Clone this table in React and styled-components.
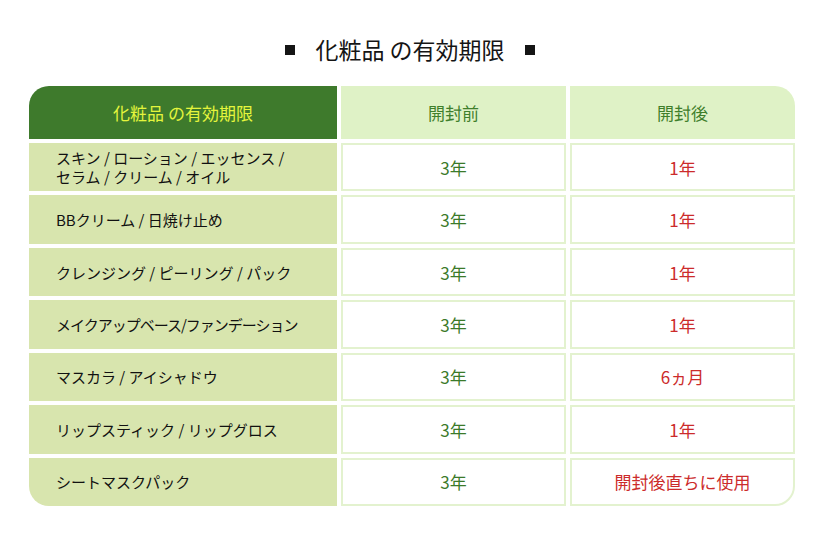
import React from 'react'
import styled, { createGlobalStyle } from 'styled-components'

const GlobalStyle = createGlobalStyle`
    body{
        margin: 0;
        background: #ffffff;
        font-family: "Noto Sans CJK JP", "Noto Sans", sans-serif;
    }
`;

const rows = [
    { name: ['スキン / ローション / エッセンス /', 'セラム / クリーム / オイル'], before: '3年', after: '1年' },
    { name: ['BBクリーム / 日焼け止め'], before: '3年', after: '1年' },
    { name: ['クレンジング / ピーリング / パック'], before: '3年', after: '1年' },
    { name: ['メイクアップベース/ファンデーション'], before: '3年', after: '1年', tight: true },
    { name: ['マスカラ / アイシャドウ'], before: '3年', after: '6ヵ月' },
    { name: ['リップスティック / リップグロス'], before: '3年', after: '1年' },
    { name: ['シートマスクパック'], before: '3年', after: '開封後直ちに使用' },
]

function App() {
    const last = rows.length - 1
    return (
        <PageStyled>
            <GlobalStyle />
            <Title>
                <Square />
                <span>化粧品 の有効期限</span>
                <Square />
            </Title>
            <Table>
                <HeadCell $main $corner="tl">化粧品 の有効期限</HeadCell>
                <HeadCell>開封前</HeadCell>
                <HeadCell $corner="tr">開封後</HeadCell>
                {rows.map((row, i) => (
                    <React.Fragment key={i}>
                        <NameCell $corner={i === last ? 'bl' : ''} $tight={row.tight}>
                            <div>
                                {row.name.map((line) => <div key={line}>{line}</div>)}
                            </div>
                        </NameCell>
                        <ValueCell $tone="green">{row.before}</ValueCell>
                        <ValueCell $tone="red" $corner={i === last ? 'br' : ''}>{row.after}</ValueCell>
                    </React.Fragment>
                ))}
            </Table>
        </PageStyled>
    )
}

const radius = (corner) => {
    switch (corner) {
        case 'tl': return 'border-top-left-radius: 20px;'
        case 'tr': return 'border-top-right-radius: 20px;'
        case 'bl': return 'border-bottom-left-radius: 20px;'
        case 'br': return 'border-bottom-right-radius: 20px;'
        default: return ''
    }
}

const PageStyled = styled.div`
    width: 820px;
    height: 543px;
    padding: 32px 0 0 29px;
    box-sizing: border-box;
`;

const Title = styled.h1`
    margin: 0 0 20px -29px;
    width: 820px;
    display: flex;
    justify-content: center;
    align-items: center;
    gap: 20px;
    font-size: 23px;
    font-weight: 400;
    color: #151515;
    line-height: 34px;
`;

const Square = styled.i`
    display: block;
    width: 10px;
    height: 10px;
    background: #151515;
    margin-top: 2px;
`;

const Table = styled.div`
    display: grid;
    grid-template-columns: 308px 225px 225px;
    grid-template-rows: 53px repeat(7, 1fr);
    column-gap: 4px;
    row-gap: 4px;
    width: 766px;
    height: 420px;
`;

const HeadCell = styled.div`
    display: flex;
    align-items: center;
    justify-content: center;
    font-size: 17px;
    background: ${p => p.$main ? '#3e7a2c' : '#dff2c6'};
    color: ${p => p.$main ? '#e4f53c' : '#3f7f2c'};
    ${p => radius(p.$corner)}
`;

const NameCell = styled.div`
    display: flex;
    align-items: center;
    padding-left: 27px;
    background: #d8e5ae;
    color: #111111;
    font-size: 15px;
    font-weight: 400;
    line-height: 19px;
    letter-spacing: ${p => p.$tight ? '-1px' : '0'};
    ${p => radius(p.$corner)}
`;

const ValueCell = styled.div`
    display: flex;
    align-items: center;
    justify-content: center;
    box-sizing: border-box;
    border: 2px solid #e3f2cf;
    background: #ffffff;
    font-size: 17px;
    color: ${p => p.$tone === 'red' ? '#cc2b2b' : '#3b7a2a'};
    ${p => radius(p.$corner)}
`;

export default App
